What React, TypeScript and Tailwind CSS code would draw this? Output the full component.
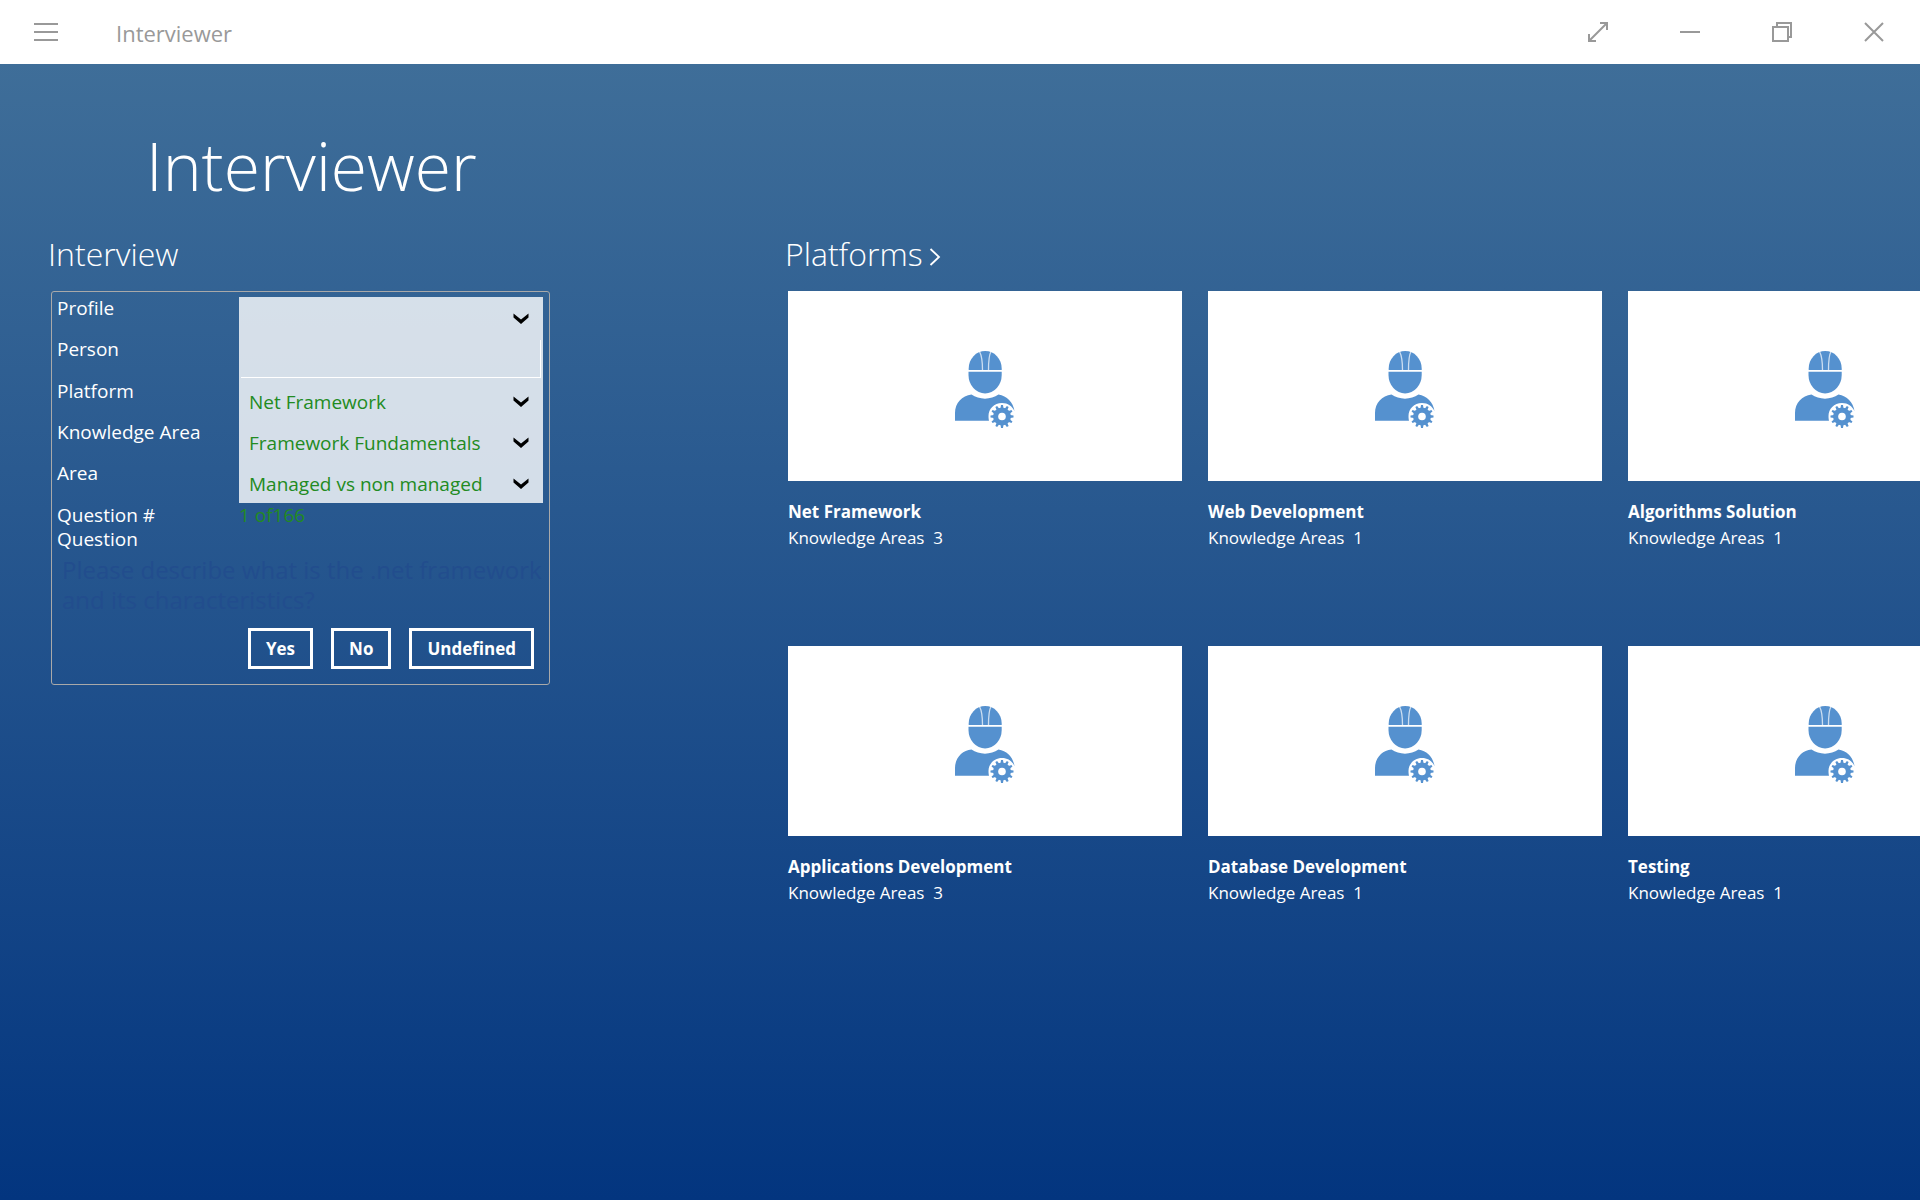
import { type ReactNode } from 'react';

const platforms = [
  { name: 'Net Framework', areas: 3 },
  { name: 'Web Development', areas: 1 },
  { name: 'Algorithms Solution', areas: 1 },
  { name: 'Applications Development', areas: 3 },
  { name: 'Database Development', areas: 1 },
  { name: 'Testing', areas: 1 },
];

const gearTeeth = [0, 30, 60, 90, 120, 150, 180, 210, 240, 270, 300, 330];

function EngineerIcon() {
  return (
    <svg className="h-20 w-16" viewBox="0 0 64 80" aria-hidden="true">
      <g fill="#5591cf">
        <path d="M15.700 21V19.500A16.500 17.500 0 0 1 48.700 19.500V21Z" />
        <path d="M15.500 22.500H48.700V26A16.600 18.500 0 0 1 15.500 26Z" />
        <path d="M2 71.700V64C2 54 9 46.500 18.500 45.500C26 51 38 51 45.500 45.500C54 47 60 53 61.500 62C59 57 55 54 49 54C41 54 35.500 60 35.500 67C35.500 68.500 35.700 70.500 36 71.700Z" />
        <circle cx="49" cy="67.500" r="9" />
        {gearTeeth.map((a) => (
          <path key={a} d="M47.500 59.500L48 56H50L50.500 59.500Z" transform={`rotate(${a} 49 67.500)`} />
        ))}
      </g>
      <circle cx="49" cy="67.500" r="3.800" fill="#fff" />
      <path d="M26.500 2.500C29 7 29.500 12 29.500 21M38 2.500C35.500 7 35.500 12 35.500 21" fill="none" stroke="#fff" strokeOpacity="0.7" strokeWidth="1.300" />
      <path d="M15 21.700H49.500" stroke="#fff" strokeWidth="1.600" />
    </svg>
  );
}

function TitleButton({ label, children }: { label: string; children: ReactNode }) {
  return (
    <button type="button" aria-label={label} className="flex h-16 w-[92px] items-center justify-center">
      <svg className="h-6 w-6" viewBox="0 0 24 24" fill="none" stroke="#999" strokeWidth="2" aria-hidden="true">
        {children}
      </svg>
    </button>
  );
}

function SelectRow({ id, label, value }: { id: string; label: string; value: string }) {
  return (
    <div className="flex h-[41px]">
      <label htmlFor={id} className="w-[182px] shrink-0 leading-[23px]">{label}</label>
      <div className="relative flex-1 bg-white/80">
        <select id={id} defaultValue={value} className="h-full w-full appearance-none bg-transparent pt-1 pr-10 pl-2.5 text-[#228b22] outline-none">
          <option>{value}</option>
        </select>
        <svg className="pointer-events-none absolute top-4 right-[14px] h-[11px] w-4" viewBox="0 0 16 11" aria-hidden="true">
          <path d="M0.500 0.500L8 6.500L15.500 0.500V4.500L8 11L0.500 4.500Z" fill="#000" />
        </svg>
      </div>
    </div>
  );
}

function AnswerButton({ children }: { children: ReactNode }) {
  return (
    <button type="button" className="h-[41px] border-3 border-white px-[15px] text-[17px] font-bold">
      {children}
    </button>
  );
}

export default function App() {
  return (
    <div className="flex min-h-screen flex-col bg-linear-to-b from-[#42719a] to-[#03357f] font-['Open_Sans','Noto_Sans',sans-serif] text-white">
      <header className="flex h-16 items-center bg-white">
        <button type="button" aria-label="Menu" className="flex h-16 w-[92px] items-center justify-center">
          <svg className="h-6 w-6" viewBox="0 0 24 24" stroke="#999" strokeWidth="2" aria-hidden="true">
            <path d="M0 4H24M0 12H24M0 20H24" />
          </svg>
        </button>
        <span className="flex-1 pt-0.5 pl-6 text-[22px] text-[#999]">Interviewer</span>
        <TitleButton label="Full screen">
          <path d="M3 21L21 3M14 3H21V10M3 14V21H10" />
        </TitleButton>
        <TitleButton label="Minimize">
          <path d="M2 12H22" />
        </TitleButton>
        <TitleButton label="Restore">
          <path d="M3 7H18V21H3ZM7 7V3H21V17H18" />
        </TitleButton>
        <TitleButton label="Close">
          <path d="M3 3L21 21M21 3L3 21" />
        </TitleButton>
      </header>

      <h1 className="pt-[53px] pl-[146px] text-[66px] leading-[96px] font-light">Interviewer</h1>

      <main className="flex pt-[19px] pl-12">
        <section className="w-[502px] shrink-0">
          <h2 className="h-[59px] text-[32px] leading-[44px] font-light">Interview</h2>
          <form className="ml-[3px] rounded-[3px] border border-[#a9a9a9] pt-[5px] pr-1.5 pb-[15px] pl-[5px] text-[19px]">
            <SelectRow id="profile" label="Profile" value="" />
            <div className="flex h-[42px]">
              <label htmlFor="person" className="w-[182px] shrink-0 leading-[23px]">Person</label>
              <div className="flex-1 bg-white/80 px-0.5 pt-0.5 pb-0.5">
                <input id="person" type="text" className="block h-full w-full border-r border-b border-white bg-transparent px-2 text-[#228b22] outline-none" />
              </div>
            </div>
            <SelectRow id="platform" label="Platform" value="Net Framework" />
            <SelectRow id="knowledge" label="Knowledge Area" value="Framework Fundamentals" />
            <SelectRow id="area" label="Area" value="Managed vs non managed" />
            <div className="flex leading-[24px]">
              <span className="w-[182px] shrink-0">Question #</span>
              <output className="text-[#228b22]">1 of166</output>
            </div>
            <div className="leading-[24px]">Question</div>
            <p className="pt-1 pl-[5px] text-2xl leading-[30px] text-[#224d8d]">
              Please describe what is the .net framework and its characteristics?
            </p>
            <div className="flex justify-end gap-[18px] pt-[13px] pr-[9px]">
              <AnswerButton>Yes</AnswerButton>
              <AnswerButton>No</AnswerButton>
              <AnswerButton>Undefined</AnswerButton>
            </div>
          </form>
        </section>

        <section className="ml-[235px] min-w-0 flex-1 overflow-hidden">
          <h2 className="h-[59px] text-[32px] leading-[44px] font-light">
            <a href="#platforms" className="inline-flex items-center gap-1.5">
              Platforms
              <svg className="mt-1.5 h-[18px] w-3" viewBox="0 0 12 18" fill="none" stroke="#fff" strokeWidth="1.800" aria-hidden="true">
                <path d="M1.500 1L10 9L1.500 17" />
              </svg>
            </a>
          </h2>
          <ul className="grid grid-cols-[repeat(3,394px)] gap-x-[26px] gap-y-[95px] pl-[3px]">
            {platforms.map((p) => (
              <li key={p.name}>
                <div className="flex h-[190px] items-center justify-center bg-white pt-1.5">
                  <EngineerIcon />
                </div>
                <h3 className="pt-[18px] text-[17px] leading-[26px] font-bold">{p.name}</h3>
                <p className="text-[17px] leading-[26px] whitespace-pre">{`Knowledge Areas  ${p.areas}`}</p>
              </li>
            ))}
          </ul>
        </section>
      </main>
    </div>
  );
}
